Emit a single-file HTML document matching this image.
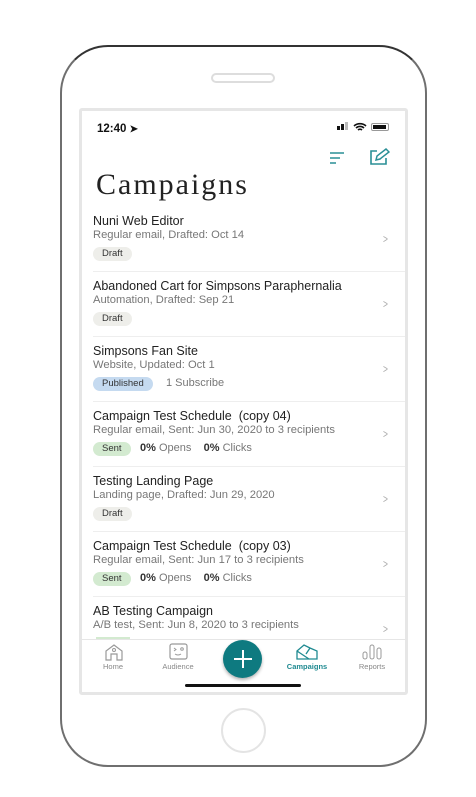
<!DOCTYPE html><html><head><style>
*{margin:0;padding:0;box-sizing:border-box}
body{width:476px;height:797px;background:#fff;position:relative;overflow:hidden;font-family:"Liberation Sans",sans-serif}
.a{position:absolute}
.phone{left:60px;top:45px;width:367px;height:722px;border:2px solid #6f6f6f;border-top-color:#333;border-radius:48px;background:#fff}
.screen{left:79px;top:108px;width:329px;height:587px;border:3px solid #e6e6e6;border-radius:3px;background:#fff;overflow:hidden}
.t{font-size:12.5px;color:#222;left:93px;white-space:nowrap}
.s{font-size:11.2px;color:#777;left:93px;white-space:nowrap}
.b{left:93px;height:14px;border-radius:7px;font-size:9.5px;line-height:14px;padding:0 9px;color:#333;background:#eeeeea}
.m{font-size:11px;color:#777;white-space:nowrap}
.m b{color:#333}
.d{left:93px;width:312px;height:1px;background:#eee}
.ch{left:382px;font-size:12px;color:#aaa;transform:scaleX(.7)}
.lab{font-size:7.5px;color:#888;top:662px;text-align:center;width:60px}
</style></head><body>
<div class="a phone"></div>
<div class="a" style="left:211px;top:73px;width:64px;height:10px;border:2px solid #ddd;border-radius:6px"></div>
<div class="a" style="left:221px;top:708px;width:45px;height:45px;border:2px solid #e4e4e4;border-radius:50%"></div>
<div class="a screen"></div>
<div class="a" style="left:97px;top:123px;font-size:11.5px;font-weight:bold;color:#111">12:40 <span style="font-size:10px">➤</span></div>
<div class="a" style="left:337px;top:126px;width:3px;height:4px;background:#111"></div>
<div class="a" style="left:341px;top:124px;width:3px;height:6px;background:#111"></div>
<div class="a" style="left:345px;top:122px;width:3px;height:8px;background:#bbb"></div>
<svg class="a" style="left:353px;top:122px" width="14" height="10" viewBox="0 0 14 10"><path d="M1 4a9 9 0 0 1 12 0M3 6a6 6 0 0 1 8 0M5 8a3 3 0 0 1 4 0" stroke="#111" stroke-width="1.6" fill="none"/></svg>
<div class="a" style="left:371px;top:123px;width:18px;height:8px;border:1px solid #999;border-radius:2px;padding:1px"><div style="width:13px;height:4px;background:#111"></div></div>
<svg class="a" style="left:329px;top:151px" width="16" height="14"><path d="M1 2h14M1 7h10M1 12h6" stroke="#2a8f96" stroke-width="1.6"/></svg>
<svg class="a" style="left:369px;top:148px" width="21" height="18"><path d="M8 3H2v13h15v-6" stroke="#2a8f96" stroke-width="1.6" fill="none"/><path d="M7 12l1-4 9-7 3 3-9 7z" stroke="#2a8f96" stroke-width="1.5" fill="none"/></svg>
<div class="a" style="left:96px;top:168px;font-family:'Liberation Serif',serif;font-size:30px;letter-spacing:2px;color:#222">Campaigns</div>

<div class="a t" style="top:214px">Nuni Web Editor</div>
<div class="a s" style="top:229px">Regular email, Drafted: Oct 14</div>
<div class="a b" style="top:247px">Draft</div>
<div class="a ch" style="top:232px">&gt;</div>
<div class="a d" style="top:271px"></div>

<div class="a t" style="top:279px">Abandoned Cart for Simpsons Paraphernalia</div>
<div class="a s" style="top:294px">Automation, Drafted: Sep 21</div>
<div class="a b" style="top:312px">Draft</div>
<div class="a ch" style="top:297px">&gt;</div>
<div class="a d" style="top:336px"></div>

<div class="a t" style="top:344px">Simpsons Fan Site</div>
<div class="a s" style="top:359px">Website, Updated: Oct 1</div>
<div class="a b" style="top:377px;background:#c5daf0">Published</div>
<div class="a m" style="left:166px;top:377px">1 Subscribe</div>
<div class="a ch" style="top:362px">&gt;</div>
<div class="a d" style="top:401px"></div>

<div class="a t" style="top:409px">Campaign Test Schedule &nbsp;(copy 04)</div>
<div class="a s" style="top:424px">Regular email, Sent: Jun 30, 2020 to 3 recipients</div>
<div class="a b" style="top:442px;background:#d3ead0">Sent</div>
<div class="a m" style="left:140px;top:442px"><b>0%</b> Opens &nbsp;&nbsp;&nbsp;<b>0%</b> Clicks</div>
<div class="a ch" style="top:427px">&gt;</div>
<div class="a d" style="top:466px"></div>

<div class="a t" style="top:474px">Testing Landing Page</div>
<div class="a s" style="top:489px">Landing page, Drafted: Jun 29, 2020</div>
<div class="a b" style="top:507px">Draft</div>
<div class="a ch" style="top:492px">&gt;</div>
<div class="a d" style="top:531px"></div>

<div class="a t" style="top:539px">Campaign Test Schedule &nbsp;(copy 03)</div>
<div class="a s" style="top:554px">Regular email, Sent: Jun 17 to 3 recipients</div>
<div class="a b" style="top:572px;background:#d3ead0">Sent</div>
<div class="a m" style="left:140px;top:572px"><b>0%</b> Opens &nbsp;&nbsp;&nbsp;<b>0%</b> Clicks</div>
<div class="a ch" style="top:557px">&gt;</div>
<div class="a d" style="top:596px"></div>

<div class="a t" style="top:604px">AB Testing Campaign</div>
<div class="a s" style="top:619px">A/B test, Sent: Jun 8, 2020 to 3 recipients</div>
<div class="a ch" style="top:622px">&gt;</div>
<div class="a" style="left:96px;top:637px;width:34px;height:3px;background:#d3ead0"></div>

<div class="a" style="left:82px;top:639px;width:323px;height:53px;background:#fff;border-top:1px solid #e6e6e6"></div>
<svg class="a" style="left:104px;top:644px" width="20" height="17"><path d="M2 16V7l8-6 8 6v9h-5v-6H7v6z" stroke="#999" stroke-width="1.2" fill="none"/><circle cx="10" cy="6" r="1.5" stroke="#999" fill="none"/></svg>
<div class="a lab" style="left:83px">Home</div>
<svg class="a" style="left:169px;top:643px" width="19" height="17"><rect x="1" y="1" width="17" height="15" rx="2" stroke="#999" stroke-width="1.2" fill="none"/><path d="M5 5l2 1.5-2 1.5M6 11q3 2 6 0" stroke="#999" fill="none"/><circle cx="13" cy="6" r="1.3" stroke="#999" fill="none"/></svg>
<div class="a lab" style="left:148px">Audience</div>
<div class="a" style="left:223px;top:640px;width:39px;height:38px;border-radius:50%;background:#0e7a80;box-shadow:0 2px 3px rgba(0,0,0,.3)"></div>
<svg class="a" style="left:233px;top:649px" width="20" height="20"><path d="M10 1v18M1 10h18" stroke="#fff" stroke-width="2"/></svg>
<svg class="a" style="left:296px;top:643px" width="22" height="17"><path d="M1 8l7-6 6 3 7 3v8H1zM1 8l12 8M14 5l-4 6" stroke="#1f8a91" stroke-width="1.3" fill="none"/></svg>
<div class="a lab" style="left:277px;color:#1f8a91;font-weight:bold">Campaigns</div>
<svg class="a" style="left:362px;top:644px" width="20" height="16"><rect x="1" y="8" width="4" height="7" rx="2" stroke="#999" fill="none"/><rect x="8" y="1" width="4" height="14" rx="2" stroke="#999" fill="none"/><rect x="15" y="4" width="4" height="11" rx="2" stroke="#999" fill="none"/></svg>
<div class="a lab" style="left:342px">Reports</div>
<div class="a" style="left:185px;top:684px;width:116px;height:3px;border-radius:2px;background:#111"></div>
</body></html>
